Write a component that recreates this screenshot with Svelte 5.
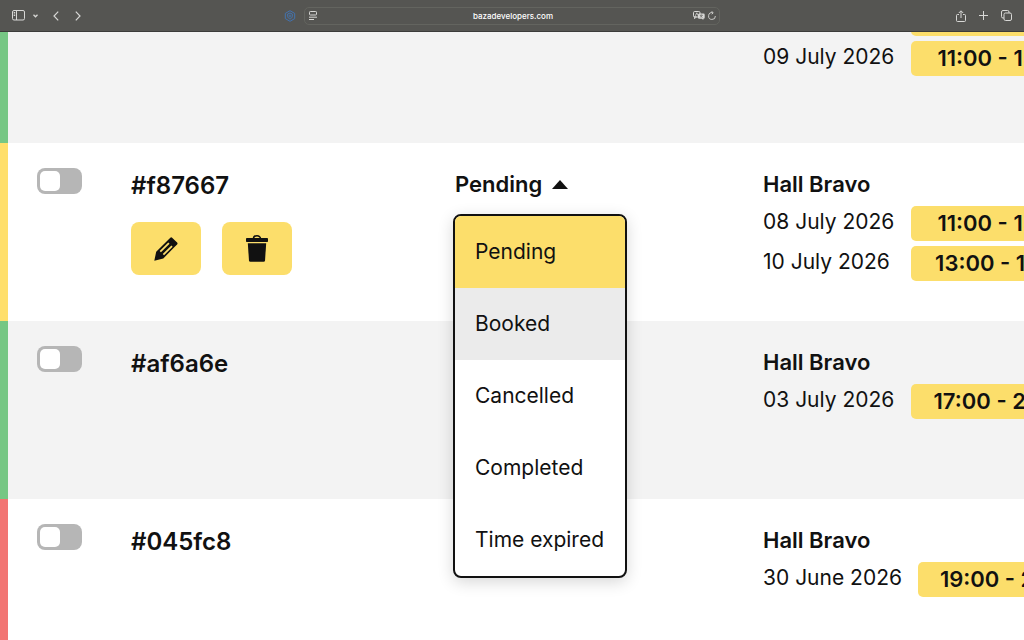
<script>
  const options = ['Pending', 'Booked', 'Cancelled', 'Completed', 'Time expired'];

  let rows = $state([
    {
      id: '', tone: 'green', tall: true, hall: 'Hall Bravo', checked: false,
      slots: [['07 July 2026', '11:00 - 15:00'], ['09 July 2026', '11:00 - 15:00']]
    },
    {
      id: '#f87667', tone: 'yellow', editable: true, status: 'Pending', hall: 'Hall Bravo', checked: false,
      slots: [['08 July 2026', '11:00 - 15:00'], ['10 July 2026', '13:00 - 15:00']]
    },
    { id: '#af6a6e', tone: 'green', hall: 'Hall Bravo', checked: false, slots: [['03 July 2026', '17:00 - 20:00']] },
    { id: '#045fc8', tone: 'red', hall: 'Hall Bravo', checked: false, slots: [['30 June 2026', '19:00 - 22:00']] }
  ]);

  let open = $state(true);
  let address = $state('bazadevelopers.com');

  function choose(row, option) {
    row.status = option;
    open = false;
  }
</script>

<div class="window">
  <header class="toolbar">
    <div class="side">
      <button class="tool" aria-label="Sidebar">
        <svg width="13" height="11" viewBox="0 0 13 11" fill="none" stroke="currentColor">
          <rect x=".5" y=".5" width="12" height="9.5" rx="1.5" />
          <path d="M4.5 .5v9.5M1.7 2.5h1.5M1.7 4h1.5M1.7 5.5h1.5" />
        </svg>
      </button>
      <button class="tool chevron" aria-label="Tab groups">
        <svg width="5" height="4" viewBox="0 0 5 4" fill="none" stroke="currentColor" stroke-width="1.3">
          <path d="M.5 .8l2 2 2-2" />
        </svg>
      </button>
      <button class="tool back" aria-label="Back">
        <svg width="6" height="10" viewBox="0 0 6 10" fill="none" stroke="currentColor" stroke-width="1.2">
          <path d="M5.2 .7L1 5l4.2 4.3" />
        </svg>
      </button>
      <button class="tool forward" aria-label="Forward">
        <svg width="6" height="10" viewBox="0 0 6 10" fill="none" stroke="currentColor" stroke-width="1.2">
          <path d="M.8 .7L5 5 .8 9.3" />
        </svg>
      </button>
      <button class="tool shield" aria-label="Privacy extension">
        <svg width="12" height="12" viewBox="0 0 12 12" fill="none" stroke="currentColor">
          <path d="M6 .7l4.7 2.7v5.2L6 11.3 1.3 8.6V3.4z" />
          <path d="M6 3l2.3 1v2.2C8.3 7.6 7.2 8.5 6 9 4.8 8.5 3.7 7.6 3.7 6.2V4z" />
          <path d="M6 4.5v3M4.7 6h2.6" stroke-width=".8" />
        </svg>
      </button>
    </div>
    <div class="address">
      <button class="tool" aria-label="Page menu">
        <svg width="8" height="9" viewBox="0 0 8 9" fill="none" stroke="currentColor">
          <rect x=".5" y=".5" width="7" height="3.5" rx=".8" />
          <path d="M0 6.2h8M0 8.5h5" />
        </svg>
      </button>
      <input aria-label="Address" type="text" bind:value={address} />
      <button class="tool" aria-label="Translate">
        <svg width="12" height="9" viewBox="0 0 12 9">
          <rect x=".5" y=".5" width="6.5" height="5.5" rx="1.2" fill="none" stroke="currentColor" />
          <path d="M1.5 5.5v2.3l2-2zM2.3 4.8l1.5-3 1.5 3" fill="none" stroke="currentColor" stroke-width=".8" />
          <path d="M6 2.5h4.5a1.2 1.2 0 0 1 1.2 1.2v2.8a1.2 1.2 0 0 1-1.2 1.2H10.3V9L8.8 7.7H6.3A1.2 1.2 0 0 1 5 6.5v-3z" fill="currentColor" />
          <path d="M6.8 4.3h3M8.3 3.5v.8M7.2 6.5l2-2M7.2 4.8l2.3 1.8" fill="none" stroke="#555552" stroke-width=".6" />
        </svg>
      </button>
      <button class="tool" aria-label="Reload">
        <svg width="8" height="9" viewBox="0 0 8 9" fill="none" stroke="currentColor" stroke-width=".9">
          <path d="M7.4 5A3.4 3.4 0 1 1 4.6 1.7M3.5 .3l1.7 1.4L3.8 3.3" />
        </svg>
      </button>
    </div>
    <div class="side end">
      <button class="tool" aria-label="Share">
        <svg width="10" height="12" viewBox="0 0 10 12" fill="none" stroke="currentColor">
          <path d="M3 4.5H1.5a1 1 0 0 0-1 1v5a1 1 0 0 0 1 1h7a1 1 0 0 0 1-1v-5a1 1 0 0 0-1-1H7M5 8V1M2.8 3L5 .8 7.2 3" />
        </svg>
      </button>
      <button class="tool" aria-label="New tab">
        <svg width="9" height="9" viewBox="0 0 9 9" fill="none" stroke="currentColor"><path d="M4.5 0v9M0 4.5h9" /></svg>
      </button>
      <button class="tool" aria-label="Tab overview">
        <svg width="11" height="11" viewBox="0 0 11 11" fill="none" stroke="currentColor">
          <rect x="3" y="3" width="7.5" height="7.5" rx="1.5" />
          <path d="M3 8H2A1.5 1.5 0 0 1 .5 6.5V2A1.5 1.5 0 0 1 2 .5h4.500A1.500 1.500 0 0 1 8 2v1" />
        </svg>
      </button>
    </div>
  </header>

  <main>
    <table>
      <colgroup><col class="c-toggle" /><col class="c-id" /><col class="c-status" /><col /></colgroup>
      <tbody>
        {#each rows as row}
          <tr class={row.tone} class:tall={row.tall}>
            <td class="mark">
              <input type="checkbox" class="toggle" aria-label="Select booking" bind:checked={row.checked} />
            </td>
            <td>
              <div class="id">{row.id}</div>
              {#if row.editable}
                <div class="actions">
                  <button class="action" aria-label="Edit">
                    <svg width="24" height="24" viewBox="0 0 24 24">
                      <path d="M16.3 .8q.9-.9 1.8 0l5 4.8q.9.9 0 1.8L20.5 10 9.3 21.5 .3 23.7 2.2 14.8z" fill="#111" />
                      <path d="M6.3 14.7L14.9 6.1M9.4 17.7L18 9.1" stroke="#fcde6b" stroke-width="1.8" />
                    </svg>
                  </button>
                  <button class="action" aria-label="Delete">
                    <svg width="22" height="27" viewBox="0 0 22 27" fill="#111">
                      <path d="M7.5 3.5a3.5 2.7 0 0 1 7 0" fill="none" stroke="#111" stroke-width="1.5" />
                      <rect x="0" y="3" width="22" height="4" rx=".8" />
                      <path d="M1.8 8.3h18.4L19 25.5q-.1 1.3-1.4 1.3H4.4Q3.1 26.8 3 25.5z" />
                    </svg>
                  </button>
                </div>
              {/if}
            </td>
            <td>
              {#if row.status}
                <div class="dropdown">
                  <button class="trigger" aria-haspopup="listbox" aria-expanded={open} onclick={() => (open = !open)}>
                    {row.status}
                    <svg width="16" height="9" viewBox="0 0 16 9"><path d="M0 9L8 0l8 9z" fill="#111" /></svg>
                  </button>
                  {#if open}
                    <div class="menu" role="listbox" aria-label="Status">
                      {#each options as option, i}
                        <button
                          role="option"
                          aria-selected={option === row.status}
                          class:hover={i === 1}
                          onclick={() => choose(row, option)}>{option}</button>
                      {/each}
                    </div>
                  {/if}
                </div>
              {/if}
            </td>
            <td>
              <div class="hall">{row.hall}</div>
              {#each row.slots as [date, time]}
                <div class="slot"><span class="date">{date}</span><span class="time">{time}</span></div>
              {/each}
            </td>
          </tr>
        {/each}
      </tbody>
    </table>
  </main>
</div>

<style>
  :global(body) {
    margin: 0;
    background: #fff;
  }
  * {
    box-sizing: border-box;
  }
  .window {
    height: 100vh;
    display: flex;
    flex-direction: column;
    overflow: hidden;
    font-family: Inter, sans-serif;
    font-size: 22px;
    color: #111;
  }
  button,
  input {
    font: inherit;
    color: inherit;
    margin: 0;
    padding: 0;
    border: 0;
    background: none;
  }
  button {
    cursor: pointer;
  }
  svg {
    display: block;
    flex: none;
  }
  .toolbar {
    flex: none;
    height: 32px;
    padding: 0 12px;
    display: grid;
    grid-template-columns: 1fr 416px 1fr;
    align-items: center;
    background: #555552;
    border-bottom: 1px solid #3c3c3a;
    color: #d8d8d6;
  }
  .side {
    display: flex;
    align-items: center;
  }
  .end {
    justify-content: flex-end;
    gap: 13px;
  }
  .chevron {
    margin-left: 8px;
  }
  .back {
    margin-left: 15px;
  }
  .forward {
    margin-left: 16px;
  }
  .shield {
    margin-left: auto;
    margin-right: 8px;
    color: #4373b0;
  }
  .address {
    height: 18px;
    padding: 0 3px 0 4px;
    display: flex;
    align-items: center;
    gap: 3px;
    border: 1px solid #63645f;
    border-radius: 5px;
  }
  .address input {
    flex: 1;
    min-width: 0;
    padding-left: 16px;
    font-size: 8px;
    font-weight: 500;
    text-align: center;
    color: #fff;
    outline: 0;
  }
  main {
    flex: 1;
    overflow: hidden;
  }
  table {
    width: 100%;
    margin-top: -94px;
    border-spacing: 0;
    table-layout: fixed;
  }
  .c-toggle {
    width: 131px;
  }
  .c-id {
    width: 324px;
  }
  .c-status {
    width: 308px;
  }
  tr {
    height: 178px;
  }
  tr.tall {
    height: 205px;
  }
  tr:nth-child(odd) {
    background: #f3f3f3;
  }
  td {
    padding: 25px 0 0;
    vertical-align: top;
    white-space: nowrap;
  }
  .mark {
    padding-left: 29px;
    border-left: 8px solid #76c784;
  }
  .yellow .mark {
    border-color: #ffdf6b;
  }
  .red .mark {
    border-color: #f27573;
  }
  .toggle {
    appearance: none;
    display: block;
    width: 45px;
    height: 26px;
    padding: 3px;
    border-radius: 8px;
    background: #b6b6b6;
  }
  .toggle::before {
    content: '';
    display: block;
    width: 20px;
    height: 20px;
    border-radius: 5px;
    background: #fff;
  }
  .toggle:checked::before {
    margin-left: auto;
  }
  .id {
    height: 36px;
    line-height: 36px;
    font-size: 24px;
    font-weight: 600;
  }
  .actions {
    display: flex;
    gap: 21px;
    margin-top: 18px;
  }
  .action {
    width: 70px;
    height: 53px;
    display: grid;
    place-items: center;
    border-radius: 8px;
    background: #fcde6b;
  }
  .dropdown {
    position: relative;
  }
  .trigger {
    display: flex;
    align-items: center;
    gap: 10px;
    line-height: 32px;
    font-weight: 600;
  }
  .menu {
    position: absolute;
    z-index: 1;
    top: 46px;
    left: -2px;
    width: 174px;
    display: flex;
    flex-direction: column;
    overflow: hidden;
    border: 2px solid #111;
    border-radius: 8px;
    background: #fff;
    box-shadow: 0 4px 16px rgb(0 0 0 / 16%);
  }
  .menu button {
    height: 72px;
    padding: 0 20px 2px;
    font-size: 21px;
    text-align: left;
  }
  .menu .hover,
  .menu button:hover {
    background: #ebebeb;
  }
  .menu button[aria-selected='true'] {
    background: #fcde6b;
  }
  .hall {
    margin-bottom: 6px;
    line-height: 32px;
    font-weight: 600;
  }
  .slot {
    display: flex;
    align-items: flex-start;
    gap: 16px;
    margin-bottom: 5px;
  }
  .date {
    flex: none;
    min-width: 132px;
    font-size: 21px;
    line-height: 32px;
  }
  .time {
    flex: none;
    width: 188px;
    line-height: 35px;
    text-align: center;
    font-weight: 600;
    border-radius: 5px;
    background: #fcde6b;
  }
</style>
